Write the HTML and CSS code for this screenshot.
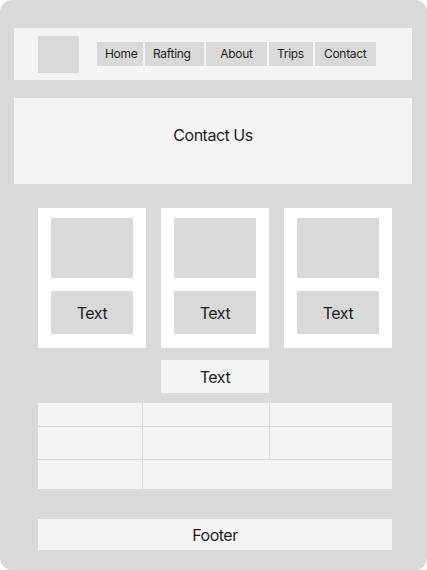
FILE: index.html
```html
<!DOCTYPE html>
<html>
<head>
<meta charset="utf-8">
<link rel="stylesheet" href="styles.css">
</head>
<body>
<div class="frame">
  <header class="header">
    <div class="logo"></div>
    <nav class="nav">
      <a class="nav-item nav-home">Home</a>
      <a class="nav-item nav-rafting">Rafting</a>
      <a class="nav-item nav-about">About</a>
      <a class="nav-item nav-trips">Trips</a>
      <a class="nav-item nav-contact">Contact</a>
    </nav>
  </header>
  <section class="hero">Contact Us</section>
  <div class="content">
    <div class="cards">
      <div class="card"><div class="card-img"></div><div class="card-text">Text</div></div>
      <div class="card"><div class="card-img"></div><div class="card-text">Text</div></div>
      <div class="card"><div class="card-img"></div><div class="card-text">Text</div></div>
    </div>
    <div class="button-row"><div class="button">Text</div></div>
    <div class="table">
      <div class="cell r1"></div><div class="cell r1"></div><div class="cell r1"></div>
      <div class="cell r2"></div><div class="cell r2"></div><div class="cell r2"></div>
      <div class="cell r3"></div><div class="cell r3 span2"></div>
    </div>
    <footer class="footer">Footer</footer>
  </div>
</div>
</body>
</html>
```

FILE: styles.css
```css
html, body {
  margin: 0;
  padding: 0;
  background: #ffffff;
}
body {
  font-family: Inter, "Noto Sans", sans-serif;
  color: #1e1e1e;
}
.frame {
  width: 427px;
  height: 570px;
  box-sizing: border-box;
  background: #d9d9d9;
  border-radius: 12px;
  padding-top: 28px;
  overflow: hidden;
}
.header {
  margin: 0 15px 0 14px;
  height: 52px;
  background: #f4f4f4;
  display: flex;
  align-items: center;
}
.logo {
  width: 41px;
  height: 37px;
  background: #d9d9d9;
  margin-left: 24px;
}
.nav {
  display: flex;
  gap: 2px;
  margin-left: 18px;
}
.nav-item {
  height: 24px;
  line-height: 24px;
  background: #d9d9d9;
  font-size: 12px;
  letter-spacing: -0.3px;
  box-sizing: border-box;
  padding-left: 8px;
  white-space: nowrap;
}
.nav-home { width: 46px; }
.nav-rafting { width: 59px; }
.nav-about { width: 61px; padding-left: 0; text-align: center; }
.nav-trips { width: 44px; }
.nav-contact { width: 61px; padding-left: 9px; }
.hero {
  margin: 18px 15px 0 14px;
  height: 86px;
  box-sizing: border-box;
  padding-bottom: 12px;
  background: #f4f4f4;
  display: flex;
  align-items: center;
  justify-content: center;
  font-size: 16px;
  letter-spacing: -0.5px;
}
.content {
  padding: 0 35px 0 38px;
}
.cards {
  margin-top: 24px;
  display: flex;
  gap: 15px;
}
.card {
  width: 108px;
  height: 140px;
  box-sizing: border-box;
  background: #ffffff;
  padding: 10px 13px 0 13px;
}
.card-img {
  height: 60px;
  background: #d9d9d9;
}
.card-text {
  margin-top: 13px;
  height: 43px;
  background: #d9d9d9;
  display: flex;
  align-items: center;
  justify-content: center;
  font-size: 16px;
  letter-spacing: -0.4px;
}
.button-row {
  display: flex;
  justify-content: center;
  margin-top: 12px;
}
.button {
  width: 108px;
  height: 33px;
  background: #f4f4f4;
  display: flex;
  align-items: center;
  justify-content: center;
  font-size: 16px;
  letter-spacing: -0.4px;
}
.table {
  margin-top: 10px;
  display: grid;
  grid-template-columns: 104px 126px 122px;
  grid-template-rows: 23px 32px 29px;
  gap: 1px;
}
.cell {
  background: #f4f4f4;
}
.span2 {
  grid-column: span 2;
}
.footer {
  margin-top: 30px;
  height: 31px;
  background: #f4f4f4;
  display: flex;
  align-items: center;
  justify-content: center;
  font-size: 16px;
  letter-spacing: -0.5px;
}
```
